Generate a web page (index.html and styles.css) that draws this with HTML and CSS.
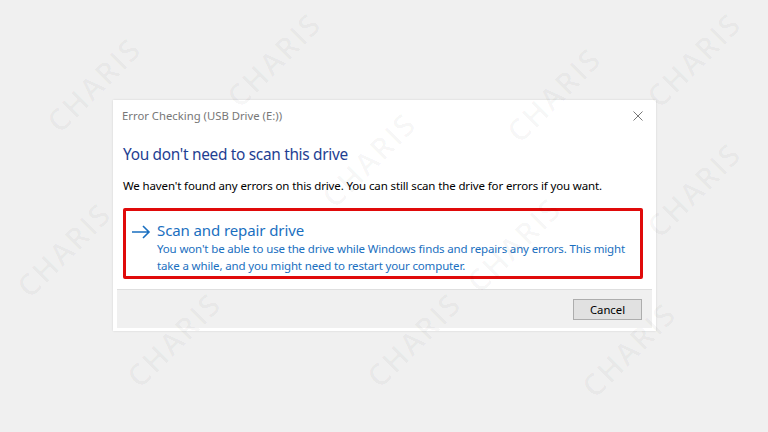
FILE: index.html
```html
<!DOCTYPE html>
<html lang="en">
<head>
  <meta charset="UTF-8">
  <title>Error Checking (USB Drive (E:))</title>
  <link rel="stylesheet" href="styles.css">
</head>
<body>

  <div class="watermarks">
    <span class="wm" style="left:35px;top:65px">CHARIS</span>
    <span class="wm" style="left:215px;top:40px">CHARIS</span>
    <span class="wm" style="left:310px;top:140px">CHARIS</span>
    <span class="wm" style="left:495px;top:75px">CHARIS</span>
    <span class="wm" style="left:635px;top:40px">CHARIS</span>
    <span class="wm" style="left:635px;top:170px">CHARIS</span>
    <span class="wm" style="left:5px;top:230px">CHARIS</span>
    <span class="wm" style="left:455px;top:225px">CHARIS</span>
    <span class="wm" style="left:115px;top:320px">CHARIS</span>
    <span class="wm" style="left:355px;top:320px">CHARIS</span>
    <span class="wm" style="left:570px;top:330px">CHARIS</span>
  </div>

  <div class="dialog">
    <div class="title-bar">
      <span class="title">Error Checking (USB Drive (E:))</span>
      <svg class="close" width="10" height="10" viewBox="0 0 10 10">
        <path d="M0.5 0.5 L9.5 9.5 M9.5 0.5 L0.5 9.5" stroke="#777" stroke-width="1" fill="none"/>
      </svg>
    </div>

    <div class="content">
      <h1>You don't need to scan this drive</h1>
      <p class="info">We haven't found any errors on this drive. You can still scan the drive for errors if you want.</p>

      <div class="command">
        <svg class="arrow" width="20" height="14" viewBox="0 0 20 14">
          <path d="M1 7 H18 M12 1 L18 7 L12 13" stroke="#1a6fc0" stroke-width="1.6" fill="none"/>
        </svg>
        <div class="command-text">
          <div class="command-title">Scan and repair drive</div>
          <div class="command-desc">You won't be able to use the drive while Windows finds and repairs any errors. This might take a while, and you might need to restart your computer.</div>
        </div>
      </div>
    </div>

    <div class="footer">
      <button>Cancel</button>
    </div>
  </div>

</body>
</html>
```

FILE: styles.css
```css
body {
  margin: 0;
  padding-top: 100px;
  background: #f0f0f0;
  font-family: "Noto Sans", "Open Sans", sans-serif;
  height: 432px;
  box-sizing: border-box;
  overflow: hidden;
  position: relative;
}
.watermarks {
  position: absolute;
  top: 0;
  left: 0;
  width: 768px;
  height: 432px;
  overflow: hidden;
  pointer-events: none;
  z-index: 2;
}
.wm {
  position: absolute;
  font-family: "Open Sans", sans-serif;
  font-size: 30px;
  line-height: 40px;
  font-weight: 600;
  letter-spacing: 2px;
  color: rgba(0,0,0,0.04);
  transform: rotate(-45deg);
  transform-origin: center;
}
.dialog {
  position: relative;
  z-index: 1;
  margin-left: 113px;
  width: 543px;
  height: 231px;
  background: #fff;
  box-shadow: 0 0 2px rgba(0,0,0,0.12);
  display: flex;
  flex-direction: column;
}
.title-bar {
  display: flex;
  align-items: center;
  justify-content: space-between;
  padding: 8px 13px 0 9px;
  height: 16px;
}
.title {
  font-size: 11.3px;
  line-height: 16px;
  color: #777;
}
.close {
  display: block;
}
.content {
  padding: 0 10px;
  flex: 1;
}
h1 {
  margin: 20px 0 0 0;
  font-size: 15.4px;
  line-height: 22px;
  letter-spacing: -0.3px;
  font-weight: normal;
  color: #1e3e92;
}
.info {
  margin: 12px 0 0 0;
  font-size: 11.5px;
  line-height: 16px;
  letter-spacing: -0.13px;
  color: #000;
}
.command {
  margin-top: 14px;
  width: 520px;
  height: 71px;
  box-sizing: border-box;
  border: 3px solid #e00a0a;
  border-radius: 2px;
  display: flex;
  align-items: flex-start;
  padding: 9px 6px 0 5px;
}
.arrow {
  margin-top: 5px;
  margin-right: 6px;
  flex: none;
}
.command-title {
  font-size: 15px;
  line-height: 20px;
  letter-spacing: -0.1px;
  color: #1a6fc0;
}
.command-desc {
  font-size: 11.5px;
  line-height: 17px;
  letter-spacing: -0.15px;
  color: #1a6fc0;
}
.footer {
  margin: 0 4px 3px 4px;
  height: 38px;
  background: #f0f0f0;
  border-top: 1px solid #dfdfdf;
  display: flex;
  align-items: center;
  justify-content: flex-end;
  padding-right: 10px;
}
button {
  width: 69px;
  height: 21px;
  background: #e1e1e1;
  border: 1px solid #adadad;
  font-family: "Noto Sans", sans-serif;
  font-size: 11.3px;
  color: #000;
  padding: 0;
}
```
